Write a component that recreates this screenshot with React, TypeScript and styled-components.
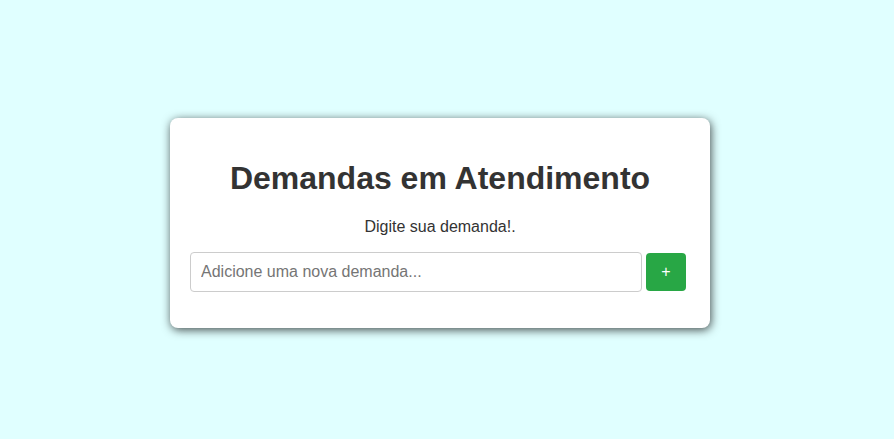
import React, { useState } from "react";
import styled, { createGlobalStyle } from "styled-components";

const Global = createGlobalStyle`
  html, body {
    margin: 0;
    padding: 0;
    background: #e0ffff;
    font-family: "Liberation Sans", Arial, sans-serif;
    color: #333;
  }
`;

const Page = styled.div`
  box-sizing: border-box;
  height: 100vh;
  display: flex;
  align-items: center;
  justify-content: center;
  padding: 7px 14px 0 0;
`;

const Card = styled.div`
  box-sizing: border-box;
  width: 540px;
  background: #fff;
  border-radius: 8px;
  padding: 20px;
  box-shadow: 1px 2px 10px rgba(0, 0, 0, 0.7);
  text-align: center;
`;

const Title = styled.h1`
  font-size: 32px;
  font-weight: bold;
  margin: 21.44px 0;
  color: #333;
`;

const Subtitle = styled.p`
  font-size: 16px;
  margin: 16px 0;
  color: #333;
`;

const Form = styled.form`
  display: flex;
  align-items: center;
  gap: 4px;
  padding-right: 4px;
  margin-bottom: 16px;
`;

const Input = styled.input`
  box-sizing: border-box;
  flex: 1;
  height: 40px;
  padding: 10px;
  font-size: 16px;
  font-family: "Liberation Sans", Arial, sans-serif;
  border: 1px solid #ccc;
  border-radius: 4px;
  color: #333;
  outline: none;
  &::placeholder {
    color: #757575;
  }
`;

const AddButton = styled.button`
  box-sizing: border-box;
  width: 40px;
  height: 38px;
  border: none;
  border-radius: 4px;
  background: #28a745;
  color: #fff;
  font-size: 16px;
  font-family: "Liberation Sans", Arial, sans-serif;
  cursor: pointer;
  padding: 0;
`;

export default function App() {
  const [value, setValue] = useState("");
  return (
    <>
      <Global />
      <Page>
        <Card>
          <Title>Demandas em Atendimento</Title>
          <Subtitle>Digite sua demanda!.</Subtitle>
          <Form onSubmit={(e) => e.preventDefault()}>
            <Input
              placeholder="Adicione uma nova demanda..."
              value={value}
              onChange={(e) => setValue(e.target.value)}
            />
            <AddButton type="submit">+</AddButton>
          </Form>
        </Card>
      </Page>
    </>
  );
}
